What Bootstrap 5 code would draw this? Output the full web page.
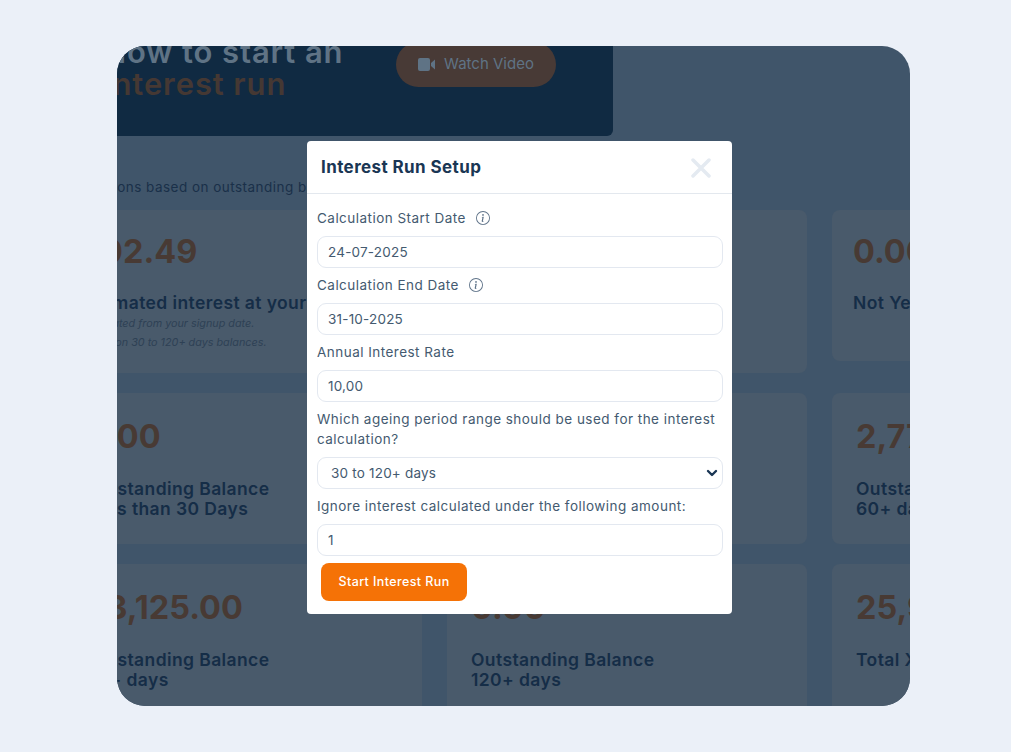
<!DOCTYPE html>
<html lang="en">
<head>
    <meta charset="UTF-8">
    <meta name="viewport" content="width=device-width, initial-scale=1">
    <title>Interest Run Setup</title>
    <link href="https://cdn.jsdelivr.net/npm/bootstrap@5.3.0/dist/css/bootstrap.min.css" rel="stylesheet">
    <style>
        html, body { height: 100%; }
        body {
            background: #ebf0f8;
            font-family: Inter, "Liberation Sans", sans-serif;
            color: #1a3654;
            padding: 46px 101px 46px 117px;
            overflow: hidden;
        }
        .app-frame {
            position: relative;
            height: 660px;
            background: #40556a;
            border-radius: 28px;
            overflow: hidden;
        }
        .app-inner { width: 1130px; margin-left: -55px; margin-top: -20px; }

        .hero-box {
            width: 551px;
            height: 110px;
            background: #102a42;
            border-radius: 6px;
            padding: 10px 57px 0 41px;
        }
        .hero-title { font-size: 31px; line-height: 32px; font-weight: 600; letter-spacing: .9px; color: #5f7385; margin: 0; }
        .hero-title span { color: #453833; display: block; }
        .watch-btn {
            height: 45px;
            width: 160px;
            margin-top: 6px;
            background: #483a36;
            color: #5f7385;
            border: 0;
            border-radius: 23px;
            font-size: 15px;
        }
        .hero-sub { font-size: 13.5px; letter-spacing: .47px; line-height: 20px; margin: 41px 0 13px -4px; color: #1a3049; }

        .stat-grid { display: grid; grid-template-columns: 360px 360px 360px; column-gap: 25px; row-gap: 20px; align-items: start; }
        .stat-box { background: #495a6b; border-radius: 8px; padding: 25px 24px; height: 151px; }
        .stat-tall { height: 163px; padding-top: 23px; padding-left: 18px; }
        .stat-tight { padding-top: 23px; padding-left: 21px; }
        .stat-open { height: 160px; }
        .stat-num { font-size: 32.5px; line-height: 38px; font-weight: 700; color: #483a34; margin-bottom: 23px; }
        .stat-tall .stat-num, .stat-tight .stat-num { margin-bottom: 22px; }
        .stat-name { font-size: 17.5px; letter-spacing: .4px; line-height: 20px; font-weight: 600; color: #152d47; }
        .stat-first { margin-bottom: 1px; }
        .stat-note { font-size: 10.8px; line-height: 19px; font-style: italic; color: #2e4155; }

        .run-modal {
            position: absolute;
            left: 190px;
            top: 95px;
            width: 425px;
            height: 473px;
            background: #fff;
            border: 0;
            border-radius: 4px;
            color: #445a70;
        }
        .run-modal .modal-header { height: 53px; padding: 2px 21px 0 14px; border-bottom: 1px solid #e3e8ee; border-radius: 4px 4px 0 0; }
        .run-modal .modal-title { font-size: 17px; letter-spacing: .4px; font-weight: 700; color: #1a3654; }
        .close-x { font-size: 0; line-height: 0; }
        .run-modal .modal-body { padding: 7px 9px 13px 10px; }
        .field-label { display: block; font-size: 13.5px; letter-spacing: .47px; line-height: 20px; margin: 7px 0 8px 0; color: #445a70; }
        .info-ic { margin-left: 6px; vertical-align: -2px; color: #5f7389; }
        .run-modal .form-control, .run-modal .form-select {
            height: 32px;
            padding: 0 10px;
            font-size: 13.5px;
            letter-spacing: .2px;
            color: #445a70;
            border: 1px solid #e3e8f0;
            border-radius: 9px;
            box-shadow: none;
        }
        .run-modal .form-select {
            padding-left: 13px;
            background-image: url("data:image/svg+xml,%3csvg xmlns='http://www.w3.org/2000/svg' viewBox='0 0 12 12'%3e%3cpath fill='none' stroke='%231a3654' stroke-width='2.4' stroke-linecap='round' stroke-linejoin='round' d='M2 4l4 4 4-4'/%3e%3c/svg%3e");
            background-size: 12px 12px;
            background-position: right 4px center;
        }
        .start-btn {
            display: block;
            width: 146px;
            height: 38px;
            margin: 7px 0 0 4px;
            background: #f57206;
            color: #fff;
            border: 0;
            border-radius: 8px;
            font-size: 12.5px;
            letter-spacing: .4px;
            font-weight: 500;
        }
    </style>
</head>
<body>

<div class="app-frame">
    <div class="app-inner">
        <div class="hero-box d-flex justify-content-between align-items-start">
            <h2 class="hero-title">How to start an <span>Interest run</span></h2>
            <button class="watch-btn d-flex align-items-center justify-content-center gap-2" type="button">
                <svg width="18" height="13" viewBox="0 0 18 13" fill="#5f7385"><rect x="0" y="0" width="12" height="13" rx="2"/><path d="M13 5l4-3.500v10l-4-3.500z"/></svg>
                Watch Video
            </button>
        </div>

        <p class="hero-sub">Calculations based on outstanding balances</p>

        <div class="stat-grid">
            <div class="stat-box stat-tall">
                <div class="stat-num">902.49</div>
                <div class="stat-name stat-first">Estimated interest at your</div>
                <div class="stat-note">Calculated from your signup date.</div>
                <div class="stat-note">Based on 30 to 120+ days balances.</div>
            </div>
            <div class="stat-box stat-tall"></div>
            <div class="stat-box stat-tight">
                <div class="stat-num">0.00</div>
                <div class="stat-name">Not Yet</div>
            </div>

            <div class="stat-box">
                <div class="stat-num">0.00</div>
                <div class="stat-name">Outstanding Balance<br>Less than 30 Days</div>
            </div>
            <div class="stat-box"></div>
            <div class="stat-box">
                <div class="stat-num">2,775.00</div>
                <div class="stat-name">Outstanding Balance<br>60+ days</div>
            </div>

            <div class="stat-box stat-open">
                <div class="stat-num">23,125.00</div>
                <div class="stat-name">Outstanding Balance<br>90+ days</div>
            </div>
            <div class="stat-box stat-open">
                <div class="stat-num">0.00</div>
                <div class="stat-name">Outstanding Balance<br>120+ days</div>
            </div>
            <div class="stat-box stat-open">
                <div class="stat-num">25,900.00</div>
                <div class="stat-name">Total Xero</div>
            </div>
        </div>
    </div>

    <div class="modal-content run-modal">
        <div class="modal-header d-flex justify-content-between align-items-center">
            <h5 class="modal-title">Interest Run Setup</h5>
            <span class="close-x">
                <svg width="20" height="20" viewBox="0 0 20 20"><path d="M2 2l16 16M18 2L2 18" stroke="#e4eaf1" stroke-width="3.500" stroke-linecap="round" fill="none"/></svg>
            </span>
        </div>
        <div class="modal-body">
            <label class="field-label">Calculation Start Date
                <svg class="info-ic" width="14" height="14" viewBox="0 0 16 16" fill="currentColor"><path d="M8 15A7 7 0 1 1 8 1a7 7 0 0 1 0 14zm0 1A8 8 0 1 0 8 0a8 8 0 0 0 0 16z"/><path d="m8.930 6.588-2.290.287-.082.380.450.083c.294.070.352.176.288.469l-.738 3.468c-.194.897.105 1.319.808 1.319.545 0 1.178-.252 1.465-.598l.088-.416c-.200.176-.492.246-.686.246-.275 0-.375-.193-.304-.533L8.930 6.588zM9 4.500a1 1 0 1 1-2 0 1 1 0 0 1 2 0z"/></svg>
            </label>
            <input class="form-control" type="text" value="24-07-2025">
            <label class="field-label">Calculation End Date
                <svg class="info-ic" width="14" height="14" viewBox="0 0 16 16" fill="currentColor"><path d="M8 15A7 7 0 1 1 8 1a7 7 0 0 1 0 14zm0 1A8 8 0 1 0 8 0a8 8 0 0 0 0 16z"/><path d="m8.930 6.588-2.290.287-.082.380.450.083c.294.070.352.176.288.469l-.738 3.468c-.194.897.105 1.319.808 1.319.545 0 1.178-.252 1.465-.598l.088-.416c-.200.176-.492.246-.686.246-.275 0-.375-.193-.304-.533L8.930 6.588zM9 4.500a1 1 0 1 1-2 0 1 1 0 0 1 2 0z"/></svg>
            </label>
            <input class="form-control" type="text" value="31-10-2025">
            <label class="field-label">Annual Interest Rate</label>
            <input class="form-control" type="text" value="10,00">
            <label class="field-label">Which ageing period range should be used for the interest calculation?</label>
            <select class="form-select">
                <option>30 to 120+ days</option>
            </select>
            <label class="field-label">Ignore interest calculated under the following amount:</label>
            <input class="form-control" type="text" value="1">
            <button class="btn start-btn" type="button">Start Interest Run</button>
        </div>
    </div>
</div>

</body>
</html>
